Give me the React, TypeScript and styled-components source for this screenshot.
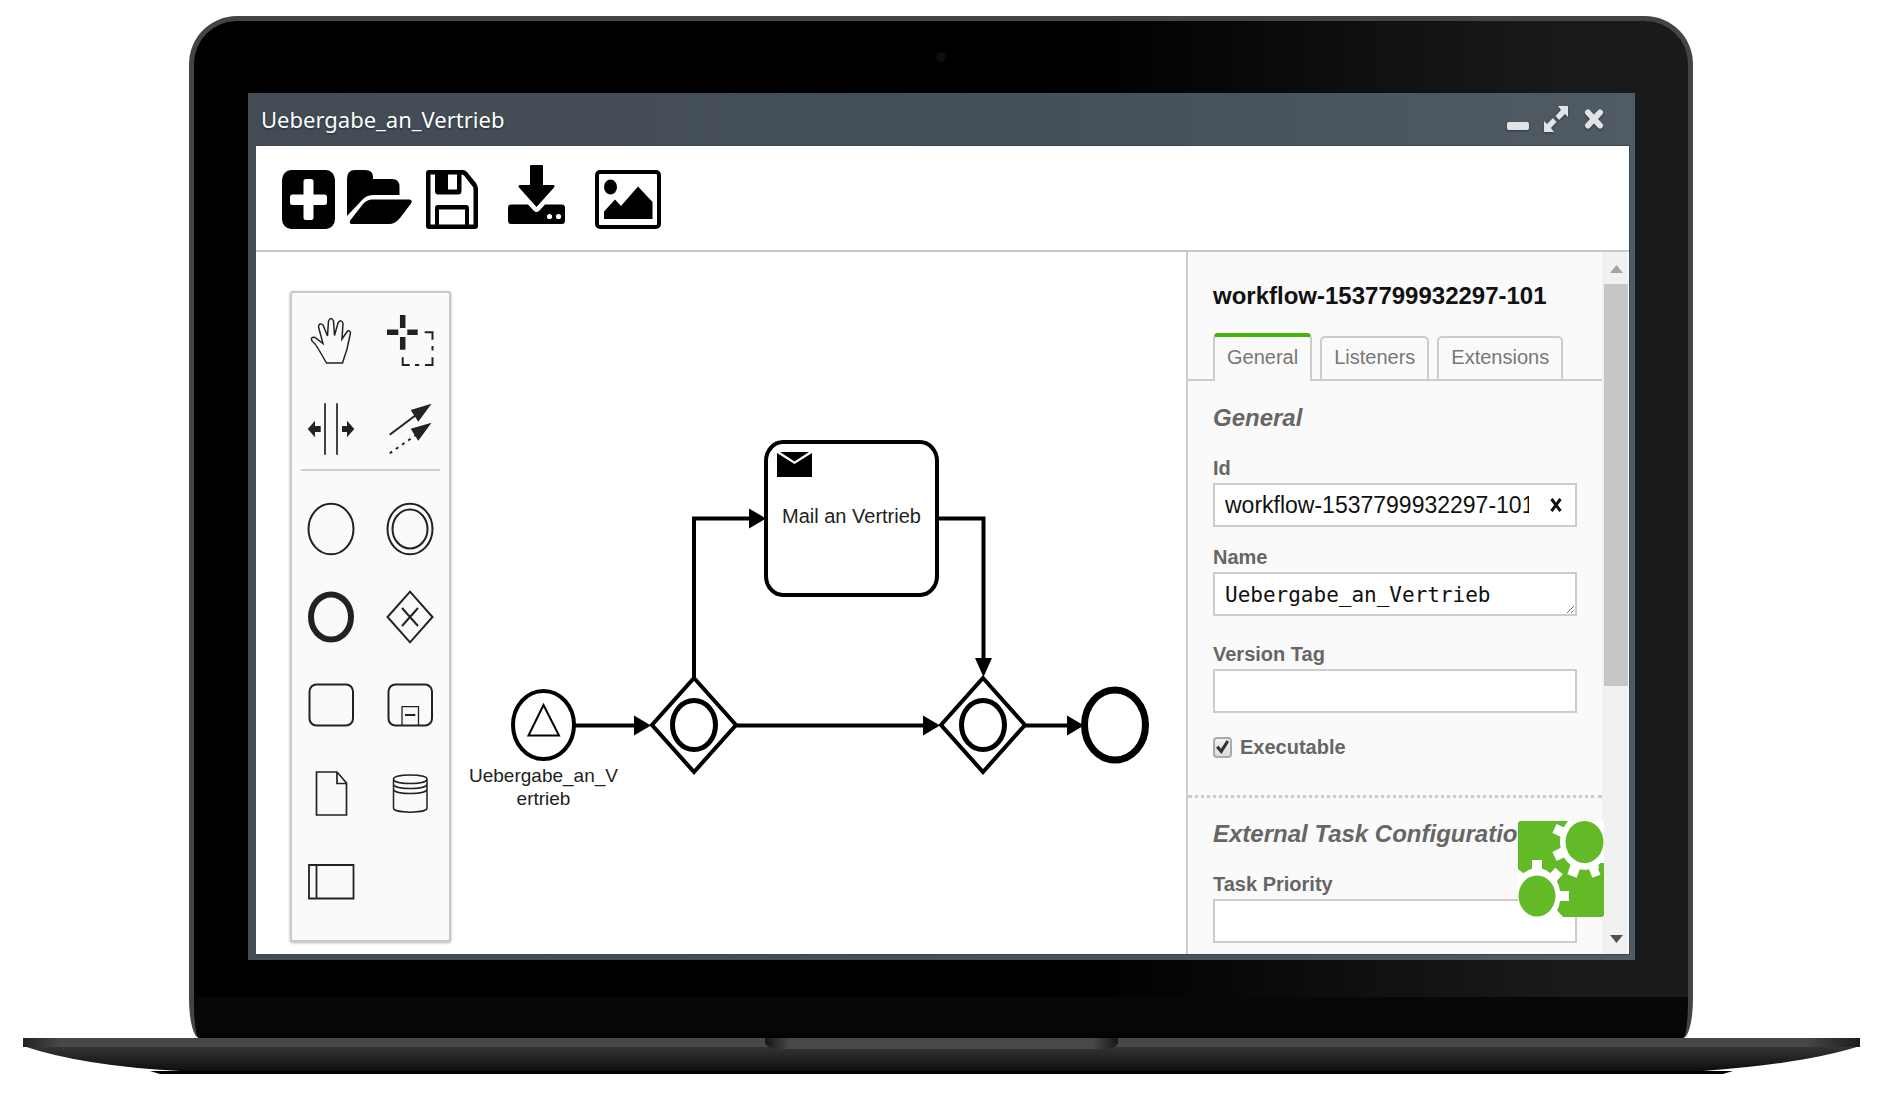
import React, { useState } from "react";
import styled, { createGlobalStyle } from "styled-components";

const GlobalStyle = createGlobalStyle`
  *, *::before, *::after { box-sizing: border-box; }
  body {
    margin: 0;
    background: #fff;
    color: #111;
    font-family: "Liberation Sans", Arial, sans-serif;
    font-size: 20px;
  }
  button, input, textarea { font: inherit; color: inherit; }
`;

/* ---------- laptop ---------- */

const Laptop = styled.div`
  padding: 16px 26px 22px 23px;
`;

const Lid = styled.div`
  margin: 0 167px 0 166px;
  border: 5px solid #444;
  border-bottom: 0;
  border-radius: 48px 48px 10px 10px / 48px 48px 40px 40px;
  background: linear-gradient(90deg, #000 0%, #000 60%, #111 80%, #1a1a1a 92%);
  overflow: hidden;
`;

const CameraBar = styled.div`
  display: flex;
  align-items: center;
  justify-content: center;
  height: 72px;
`;

const Camera = styled.span`
  width: 10px;
  height: 10px;
  border-radius: 50%;
  background: #0e0e12;
`;

const Chin = styled.div`
  height: 41px;
  margin-top: 37px;
  background: linear-gradient(#070707 80%, #000);
`;

const BaseDrawing = styled.svg`
  display: block;
  width: 100%;
  height: 36px;
`;

/* ---------- application window ---------- */

const Window = styled.main`
  margin: 0 53px 0 54px;
  padding: 0 5px 5px 8px;
  background: linear-gradient(90deg, #434c55, #46505a 60%, #505b64);
`;

const TitleBar = styled.header`
  display: flex;
  align-items: center;
  justify-content: space-between;
  height: 52px;
  padding: 0 23px 0 5px;
  color: #fff;
`;

const WindowTitle = styled.h1`
  margin: 0;
  font: 400 22px/32px "Noto Sans", "Open Sans", sans-serif;
  text-shadow: 0 1px 2px #222a33;
`;

const WindowControls = styled.div`
  display: flex;
  align-items: center;
  gap: 12px;
`;

const PlainButton = styled.button`
  display: flex;
  align-items: center;
  justify-content: center;
  padding: 0;
  border: 0;
  background: none;
  cursor: pointer;
`;

const ControlButton = styled(PlainButton)`
  width: 26px;
  height: 28px;
  color: #e2e3e6;
  filter: drop-shadow(0 1px 1px #2d3740);
`;

const WindowBody = styled.div`
  border: 1px solid #394656;
  border-left: 0;
  background: #fff;
`;

const Toolbar = styled.div`
  display: flex;
  align-items: flex-end;
  height: 106px;
  padding: 0 26px 21px;
  border-bottom: 2px solid #c8c8c8;
`;

const ToolbarButton = styled(PlainButton)<{ $before?: number }>`
  margin-left: ${(p) => p.$before ?? 0}px;
  color: #000;
`;

const Workspace = styled.div`
  display: flex;
`;

/* ---------- palette ---------- */

const Palette = styled.aside`
  flex: none;
  width: 161px;
  margin: 39px 0 12px 34px;
  padding: 8px 0 18px;
  border: 2px solid #c8c8c8;
  border-radius: 3px;
  background: #fafafa;
  box-shadow: 0 1px 3px rgba(0, 0, 0, 0.3);
`;

const PaletteGroup = styled.div`
  display: grid;
  grid-template-columns: 78px 79px;
  row-gap: 8px;
`;

const PaletteButton = styled(PlainButton)`
  height: 80px;
  color: #222;
`;

const Separator = styled.hr`
  margin: 0 9px 18px;
  border: 0;
  border-top: 2px solid #d0d0d0;
`;

/* ---------- diagram ---------- */

const Canvas = styled.section`
  display: flex;
  flex: 1;
  justify-content: center;
  min-width: 0;
  overflow: hidden;
`;

const Diagram = styled.svg`
  flex: none;
`;

/* ---------- properties panel ---------- */

const Panel = styled.aside`
  position: relative;
  display: flex;
  flex: none;
  width: 443px;
  border-left: 2px solid #ccc;
`;

const PanelContent = styled.form`
  flex: 1;
  min-width: 0;
  padding: 28px 0 11px;
  background: #fafafa;
  overflow: hidden;
`;

const PanelTitle = styled.h2`
  margin: 0 25px 21px;
  font-size: 24px;
  line-height: 32px;
`;

const Tabs = styled.div`
  display: flex;
  align-items: flex-end;
  gap: 8px;
  padding: 0 25px;
  box-shadow: inset 0 -2px #ccc;
`;

const Tab = styled.button<{ $active: boolean }>`
  height: ${(p) => (p.$active ? 48 : 45)}px;
  padding: 0 12px ${(p) => (p.$active ? 4 : 3)}px;
  border: 2px solid #ccc;
  border-top: ${(p) => (p.$active ? "4px solid #44b40a" : "2px solid #ccc")};
  border-bottom: ${(p) => (p.$active ? "0" : "2px solid #ccc")};
  border-radius: 5px 5px 0 0;
  background: #fafafa;
  color: #777;
  cursor: pointer;
`;

const Group = styled.section<{ $divided?: boolean }>`
  padding: ${(p) => (p.$divided ? 22 : 23)}px 25px 0;
  border-top: ${(p) => (p.$divided ? "3px dotted #ccc" : "0")};
  margin-top: ${(p) => (p.$divided ? 36 : 0)}px;
  color: #666;
`;

const GroupTitle = styled.h3`
  margin: 0 0 24px;
  font-size: 24px;
  font-style: italic;
  line-height: 28px;
  white-space: nowrap;
`;

const Field = styled.div<{ $after?: number }>`
  margin-bottom: ${(p) => p.$after ?? 0}px;
`;

const Label = styled.label`
  display: block;
  margin-bottom: 3px;
  font-weight: 700;
  line-height: 24px;
`;

const InputFrame = styled.div`
  display: flex;
  align-items: center;
  height: 44px;
  border: 2px solid #ccc;
  background: #fff;
  color: #111;
`;

const FrameInput = styled.input`
  flex: 1;
  min-width: 0;
  height: 40px;
  padding: 0 0 0 10px;
  border: 0;
  outline: 0;
  background: none;
  font-size: 23px;
`;

const ClearButton = styled(PlainButton)`
  width: 46px;
  height: 40px;
  padding-left: 8px;
`;

const NameArea = styled.textarea`
  display: block;
  width: 100%;
  height: 44px;
  padding: 7px 10px 5px;
  border: 2px solid #ccc;
  outline: 0;
  background: #fff;
  color: #111;
  font: 21px/28px "DejaVu Sans Mono", monospace;
  overflow: hidden;
`;

const CheckRow = styled.div`
  display: flex;
  align-items: center;
  gap: 8px;
  height: 24px;
`;

const CheckLabel = styled(Label)`
  margin: 0;
`;

const CheckBox = styled.input`
  display: grid;
  place-items: center;
  appearance: none;
  width: 19px;
  height: 21px;
  margin: 0;
  border: 2px solid #aaa;
  border-radius: 4px;
  background: linear-gradient(#f2f2f2, #dcdcdc);
  &:checked::before {
    content: "";
    width: 13px;
    height: 14px;
    background: #333;
    clip-path: polygon(0 55%, 20% 40%, 38% 62%, 82% 0, 100% 14%, 42% 100%);
  }
`;

const Scrollbar = styled.div`
  display: flex;
  flex-direction: column;
  flex: none;
  align-items: flex-end;
  width: 26px;
  margin-right: 1px;
  background: #f1f1f1;
`;

const ScrollArrow = styled(PlainButton)`
  width: 24px;
  height: 32px;
  padding-top: 2px;
`;

const ScrollTrack = styled.div`
  flex: 1;
  width: 24px;
`;

const ScrollThumb = styled.div`
  height: 63%;
  background: #c6c6c6;
`;

const GearBadge = styled.svg`
  position: absolute;
  right: 25px;
  bottom: 37px;
`;

/* ---------- icons ---------- */

const NewIcon = () => (
  <svg width="53" height="59" viewBox="0 0 53 59" fill="currentColor">
    <rect width="53" height="59" rx="9" ry="10" />
    <rect x="8" y="24.5" width="37" height="10.5" rx="2.5" fill="#fff" />
    <rect x="21.5" y="9" width="10" height="41" rx="2.5" fill="#fff" />
  </svg>
);

const OpenIcon = () => (
  <svg width="65" height="59" viewBox="0 0 65 59" fill="currentColor">
    <path d="M0 46V9Q0 0 8 0H18Q26 0 26 7V9H45Q52.500 9 52.500 17V25H27Q20 25 16 29Z" />
    <path d="M25 29.500H62Q66 29.500 64 33.500L53 48Q48 54 42 54H5Q1.500 54 3.500 50L16 34Q20 29.500 25 29.500Z" />
  </svg>
);

const SaveIcon = () => (
  <svg width="52" height="59" viewBox="0 0 52 59" fill="currentColor">
    <path
      fillRule="evenodd"
      d="M3 0H37Q39 0 41 2L50 13Q52 16 52 19V56Q52 59 49 59H3Q0 59 0 56V3Q0 0 3 0ZM4.500 4.500V54.500H9V38Q9 35 12 35H40Q43 35 43 38V54.500H47.500V19Q47.500 18 47 17L38 5.500Q37 4.500 35.500 4.500V21Q35.500 24.500 32 24.500H12Q9 24.500 9 21V4.500ZM13 39.500V54.500H39V39.500ZM22 4.500V19.500H31V4.500Z"
    />
  </svg>
);

const DownloadIcon = () => (
  <svg width="57" height="64" viewBox="0 -5 57 64" fill="currentColor">
    <path d="M23 -5H34Q35 -5 35 -4V15H45Q47.500 15 46 17.500L28.500 37L11 17.500Q9.500 15 12 15H22V-4Q22 -5 23 -5Z" />
    <path d="M3 34.500H20L26 41Q28.500 43 31 41L37 34.500H54Q57 34.500 57 38V50.500Q57 54 54 54H3Q0 54 0 50.500V38Q0 34.500 3 34.500Z" />
    <circle cx="41.500" cy="46.500" r="2.600" fill="#fff" />
    <circle cx="50.500" cy="46.500" r="2.600" fill="#fff" />
  </svg>
);

const ImageIcon = () => (
  <svg width="66" height="59" viewBox="0 0 66 59" fill="currentColor">
    <rect x="2" y="2" width="62" height="55" rx="3" fill="none" stroke="currentColor" strokeWidth="4" />
    <ellipse cx="15.500" cy="17" rx="6.500" ry="7.500" />
    <path d="M9 49V41.500L20 29.500L26 36L43 16.500L57.500 32V49Z" />
  </svg>
);

const MinimizeIcon = () => (
  <svg width="24" height="26" viewBox="0 0 24 26" fill="currentColor">
    <rect x="1" y="16" width="22" height="8" rx="2" />
  </svg>
);

const ExpandIcon = () => (
  <svg width="24" height="26" viewBox="0 0 24 26" fill="currentColor">
    <path d="M14 0H24V11L21 8L15 14L11.500 10L17 4Z" />
    <path d="M10 26H0V15L3 18L9 12L12.500 16L7 22Z" />
  </svg>
);

const CloseIcon = () => (
  <svg width="20" height="22" viewBox="0 0 20 22" stroke="currentColor" strokeWidth="6" strokeLinecap="round">
    <path d="M4 4.500L16 17.500M16 4.500L4 17.500" />
  </svg>
);

const tools: Record<string, React.ReactNode> = {
  "Hand tool": (
    <path
      strokeWidth="1.500"
      d="M21.500 52L14 39Q11 33 7 30Q5 25.500 10 26.500L18 32.500L13.500 16Q14 11 18 14L22.500 25L23.500 10Q26 5 28.500 10L29.500 24.500L33 12Q36.500 7.500 38 12.500L37 28L41.500 21.500Q44.500 17.500 45.500 22L42 38L37.500 52Z"
    />
  ),
  "Lasso tool": (
    <>
      <path strokeWidth="5.500" d="M18.700 4V17M18.700 26V38.700M3 21.300H14.300M23.300 21.300H33.700" />
      <path strokeWidth="2" d="M40.700 21.300H48.500V28.700M48.500 35V39.500M48.500 46.300V54H41M35.300 54H31M25.700 54H18.700V46.300" />
    </>
  ),
  "Space tool": (
    <>
      <path strokeWidth="1.700" d="M20 4.300V55.700M32 4.300V55.700" />
      <path fill="currentColor" stroke="none" d="M2.700 30L10 21.700V27H15.700V33H10V38.300ZM49.300 30L42 21.700V27H37V33H42V38.300Z" />
    </>
  ),
  "Connect tool": (
    <>
      <path d="M5.700 35.700L32 16" />
      <path strokeDasharray="3 4.500" d="M5.700 54.300L32 36" />
      <path fill="currentColor" stroke="none" d="M47.500 4.700L26.700 11L34.300 22.700ZM47.500 23.700L26.700 29.700L34.300 41.700Z" />
    </>
  ),
  "Start event": <ellipse cx="26" cy="30" rx="22.500" ry="25.300" />,
  "Intermediate event": (
    <>
      <ellipse cx="26" cy="30" rx="22.500" ry="25.300" />
      <ellipse cx="26" cy="30" rx="17.500" ry="19.500" />
    </>
  ),
  "End event": <ellipse cx="26" cy="30" rx="20" ry="22.500" strokeWidth="6" />,
  Gateway: (
    <>
      <path d="M26 4.700L48.500 30L26 55.300L3.500 30Z" />
      <path d="M18 21L34 39M34 21L18 39" />
    </>
  ),
  Task: <rect x="4.500" y="9.500" width="43.500" height="41" rx="7" />,
  "Sub process": (
    <>
      <rect x="4.500" y="9.500" width="43.500" height="41" rx="7" />
      <path strokeWidth="1.300" d="M18 50V31.700H34.500V50" />
      <path d="M21 40H31.300" />
    </>
  ),
  "Data object": <path strokeWidth="1.700" d="M11.500 9H32L41.500 20V52H11.500ZM32 9V20.500H41.500" />,
  "Data store": (
    <path
      strokeWidth="1.500"
      d="M9.500 16V45C9.500 50.500 43 50.500 43 45V16C43 10.500 9.500 10.500 9.500 16C9.500 22 43 22 43 16M9.500 21C9.500 27 43 27 43 21M9.500 26C9.500 32 43 32 43 26"
    />
  ),
  Participant: <path strokeWidth="1.800" d="M4 14H48.500V47.500H4ZM11.500 14V47.500" />,
};

const toolNames = Object.keys(tools);

const Tool = ({ name }: { name: string }) => (
  <PaletteButton type="button" aria-label={name}>
    <svg width="52" height="60" viewBox="0 0 52 60" fill="none" stroke="currentColor" strokeWidth="2">
      {tools[name]}
    </svg>
  </PaletteButton>
);

const Gateway = ({ cx }: { cx: number }) => (
  <>
    <path d={`M${cx} 678L${cx + 42} 725L${cx} 772L${cx - 42} 725Z`} />
    <ellipse cx={cx} cy="725" rx="21.500" ry="24.500" strokeWidth="5" />
  </>
);

const ProcessDiagram = () => (
  <Diagram width="735" height="702" viewBox="451 252 735 702" role="img" aria-label="Uebergabe_an_Vertrieb">
    <g fill="none" stroke="#000" strokeWidth="4">
      <ellipse cx="543.500" cy="725" rx="30.500" ry="34" />
      <path strokeWidth="2" d="M543.500 705L528.500 735.500H559Z" />
      <path d="M575 725.500H645M736 725.500H932M1025 725.500H1075" />
      <path d="M694 678V518.500H760M938 518.500H983.500V668" />
      <Gateway cx={694} />
      <Gateway cx={983} />
      <rect x="766" y="442" width="171" height="153" rx="17" ry="19" />
      <ellipse cx="1115" cy="725" rx="30.500" ry="35" strokeWidth="7" />
    </g>
    <path d="M634 715.500L651 725.500L634 735.500ZM923 715.500L940 725.500L923 735.500ZM1067 715.500L1084 725.500L1067 735.500ZM749 508.500L766 518.500L749 528.500ZM975 658L983.500 677L992 658Z" />
    <path d="M777 453V477H812V453L794.500 464ZM780 452H809L794.500 461.500Z" />
    <g fill="#222" fontFamily="Liberation Sans, Arial, sans-serif" textAnchor="middle">
      <text x="851.500" y="523" fontSize="20">Mail an Vertrieb</text>
      <text x="543.500" y="782" fontSize="19">Uebergabe_an_V</text>
      <text x="543.500" y="805" fontSize="19">ertrieb</text>
    </g>
  </Diagram>
);

const Gears = () => (
  <GearBadge width="86" height="96" viewBox="0 0 86 96">
    <rect width="86" height="96" rx="3" fill="#62ba27" />
    <g fill="#fff" stroke="#fff" strokeWidth="10">
      <path stroke="none" d="M50 0H86V42H66ZM0 52L20 60V96H0Z" />
      <ellipse cx="66.500" cy="21" rx="24.500" ry="28" stroke="none" />
      <path d="M66 21L36.500 7.500M66 21L36.500 35.500M66 21L54 55M66 21L79 55" />
      <ellipse cx="19" cy="75" rx="23.500" ry="28" stroke="none" />
      <path d="M19 75V39M19 75L41 50M19 75H51M19 75L-4 49M19 75L42 100" />
    </g>
    <path fill="#62ba27" d="M0 30V48L5 52L14 47V36ZM86 42L80 48L84 57L86 60Z" />
    <ellipse cx="66.500" cy="21" rx="19" ry="21" fill="#62ba27" />
    <ellipse cx="19" cy="75" rx="18.500" ry="20.500" fill="#62ba27" />
  </GearBadge>
);

const LaptopBase = () => (
  <BaseDrawing viewBox="0 0 1837 36" preserveAspectRatio="none" aria-hidden="true">
    <defs>
      <linearGradient id="edge" x1="0" x2="1" y1="0" y2="0">
        <stop offset="0" stopColor="#222" />
        <stop offset="0.020" stopColor="#484848" />
        <stop offset="0.970" stopColor="#484848" />
        <stop offset="1" stopColor="#1c1c1c" />
      </linearGradient>
      <linearGradient id="under" x1="0" x2="0" y1="0" y2="1">
        <stop offset="0" stopColor="#363636" />
        <stop offset="1" stopColor="#0e0e0e" />
      </linearGradient>
      <linearGradient id="notch" x1="0" x2="1" y1="0" y2="0">
        <stop offset="0" stopColor="#161616" />
        <stop offset="0.070" stopColor="#484848" />
        <stop offset="0.930" stopColor="#484848" />
        <stop offset="1" stopColor="#161616" />
      </linearGradient>
    </defs>
    <path fill="url(#under)" d="M0 8Q60 28 157 33H1680Q1780 26 1837 8Z" />
    <rect width="1837" height="9" fill="url(#edge)" />
    <path fill="url(#notch)" d="M742 0H1095V5Q1093 11 1080 11H757Q744 11 742 5Z" />
    <path fill="#000" d="M127 33H1710L1700 36H137Z" />
  </BaseDrawing>
);

const tabNames = ["General", "Listeners", "Extensions"];

export default function App() {
  const [tab, setTab] = useState("General");
  const [id, setId] = useState("workflow-1537799932297-101");

  return (
    <>
      <GlobalStyle />
      <Laptop>
        <Lid>
          <CameraBar>
            <Camera />
          </CameraBar>
          <Window>
            <TitleBar>
              <WindowTitle>Uebergabe_an_Vertrieb</WindowTitle>
              <WindowControls>
                <ControlButton type="button" aria-label="Minimize"><MinimizeIcon /></ControlButton>
                <ControlButton type="button" aria-label="Maximize"><ExpandIcon /></ControlButton>
                <ControlButton type="button" aria-label="Close"><CloseIcon /></ControlButton>
              </WindowControls>
            </TitleBar>
            <WindowBody>
              <Toolbar>
                <ToolbarButton type="button" aria-label="New"><NewIcon /></ToolbarButton>
                <ToolbarButton type="button" aria-label="Open" $before={12}><OpenIcon /></ToolbarButton>
                <ToolbarButton type="button" aria-label="Save" $before={14}><SaveIcon /></ToolbarButton>
                <ToolbarButton type="button" aria-label="Download" $before={30}><DownloadIcon /></ToolbarButton>
                <ToolbarButton type="button" aria-label="Export image" $before={30}><ImageIcon /></ToolbarButton>
              </Toolbar>
              <Workspace>
                <Palette>
                  <PaletteGroup>
                    {toolNames.slice(0, 4).map((name) => <Tool key={name} name={name} />)}
                  </PaletteGroup>
                  <Separator />
                  <PaletteGroup>
                    {toolNames.slice(4).map((name) => <Tool key={name} name={name} />)}
                  </PaletteGroup>
                </Palette>
                <Canvas>
                  <ProcessDiagram />
                </Canvas>
                <Panel>
                  <PanelContent onSubmit={(e) => e.preventDefault()}>
                    <PanelTitle>workflow-1537799932297-101</PanelTitle>
                    <Tabs role="tablist">
                      {tabNames.map((name) => (
                        <Tab
                          key={name}
                          type="button"
                          role="tab"
                          aria-selected={tab === name}
                          $active={tab === name}
                          onClick={() => setTab(name)}
                        >
                          {name}
                        </Tab>
                      ))}
                    </Tabs>
                    <Group>
                      <GroupTitle>General</GroupTitle>
                      <Field $after={18}>
                        <Label htmlFor="process-id">Id</Label>
                        <InputFrame>
                          <FrameInput id="process-id" value={id} onChange={(e) => setId(e.target.value)} />
                          <ClearButton type="button" aria-label="Clear id" onClick={() => setId("")}>
                            <svg width="12" height="14" viewBox="0 0 12 14" stroke="currentColor" strokeWidth="3">
                              <path d="M1.500 1L10.500 13M10.500 1L1.500 13" />
                            </svg>
                          </ClearButton>
                        </InputFrame>
                      </Field>
                      <Field $after={26}>
                        <Label htmlFor="process-name">Name</Label>
                        <NameArea id="process-name" defaultValue="Uebergabe_an_Vertrieb" spellCheck={false} />
                      </Field>
                      <Field $after={22}>
                        <Label htmlFor="version-tag">Version Tag</Label>
                        <InputFrame>
                          <FrameInput id="version-tag" />
                        </InputFrame>
                      </Field>
                      <CheckRow>
                        <CheckBox type="checkbox" id="executable" defaultChecked />
                        <CheckLabel htmlFor="executable">Executable</CheckLabel>
                      </CheckRow>
                    </Group>
                    <Group $divided>
                      <GroupTitle>External Task Configuration</GroupTitle>
                      <Field>
                        <Label htmlFor="task-priority">Task Priority</Label>
                        <InputFrame>
                          <FrameInput id="task-priority" />
                        </InputFrame>
                      </Field>
                    </Group>
                  </PanelContent>
                  <Scrollbar>
                    <ScrollArrow type="button" aria-label="Scroll up">
                      <svg width="13" height="8" viewBox="0 0 13 8" fill="#a3a3a3"><path d="M6.500 0L13 8H0Z" /></svg>
                    </ScrollArrow>
                    <ScrollTrack>
                      <ScrollThumb />
                    </ScrollTrack>
                    <ScrollArrow type="button" aria-label="Scroll down">
                      <svg width="13" height="8" viewBox="0 0 13 8" fill="#505050"><path d="M6.500 8L13 0H0Z" /></svg>
                    </ScrollArrow>
                  </Scrollbar>
                  <Gears />
                </Panel>
              </Workspace>
            </WindowBody>
          </Window>
          <Chin />
        </Lid>
        <LaptopBase />
      </Laptop>
    </>
  );
}
